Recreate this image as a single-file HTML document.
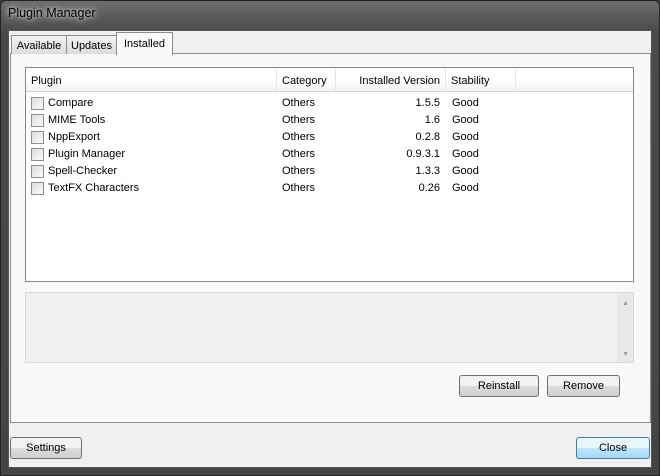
<!DOCTYPE html>
<html><head><style>
*{box-sizing:border-box;margin:0;padding:0}
body{width:660px;height:476px;overflow:hidden;font-family:"Liberation Sans",sans-serif;font-size:11px;color:#000;background:#3c3c3c;position:relative}
.frame{position:absolute;left:0;top:0;width:660px;height:476px;border:1px solid #222;border-radius:6px 6px 0 0;background:linear-gradient(#6e6e6e,#4a4a4a 30px,#444 100%)}
.title{position:absolute;left:8px;top:6px;color:#000;font-size:12.5px;text-shadow:0 0 8px #ddd,0 0 4px #ddd}
.client{position:absolute;left:8px;top:30px;width:644px;height:438px;background:#f0f0f0;border:1px solid #555}
.a{position:absolute}
.tab{position:absolute;top:4px;height:19px;border:1px solid #898c95;border-bottom:none;background:linear-gradient(#f2f2f2,#dcdcdc);padding:4px 0 0;font-size:11px;text-align:center}
.panel{position:absolute;left:1px;top:22px;width:641px;height:370px;border:1px solid #898c95;background:#f9f9f9}
.list{position:absolute;left:16px;top:36px;width:609px;height:215px;border:1px solid #828790;background:#fff}
.hdr{position:absolute;top:0;height:24px;border-right:1px solid #e5e5e5;background:linear-gradient(#fff 50%,#f1f2f4);border-bottom:1px solid #d5d5d5;padding:7px 5px 0}
.row{position:absolute;left:0;height:17px;width:100%}
.row span{position:absolute;top:3px}
.cb{position:absolute;left:5px;top:3px;width:13px;height:13px;border:1px solid #8f8f8f;background:linear-gradient(135deg,#dcdcdc,#fbfbfb)}
.btn{position:absolute;height:22px;border:1px solid #707070;border-radius:3px;background:linear-gradient(#f2f2f2 50%,#dddddd 50%,#cfcfcf);text-align:center;padding-top:4px;font-size:11px}
</style></head><body>
<div class="frame"></div>
<div class="title">Plugin Manager</div>
<div class="client">
 <div class="panel"></div>
 <div class="tab" style="left:2px;width:56px">Available</div>
 <div class="tab" style="left:57px;width:51px">Updates</div>
 <div class="tab" style="left:107px;top:1px;height:23px;width:57px;background:#f9f9f9;padding-top:5px">Installed</div>
 <div class="list">
  <div class="hdr" style="left:0;width:251px">Plugin</div>
  <div class="hdr" style="left:251px;width:59px">Category</div>
  <div class="hdr" style="left:310px;width:110px;text-align:right">Installed Version</div>
  <div class="hdr" style="left:420px;width:70px">Stability</div>
  <div class="hdr" style="left:490px;width:117px;border-right:none"></div>
  <div class="row" style="top:26px"><i class="cb"></i><span style="left:22px">Compare</span><span style="left:256px">Others</span><span style="right:193px">1.5.5</span><span style="left:426px">Good</span></div>
  <div class="row" style="top:43px"><i class="cb"></i><span style="left:22px">MIME Tools</span><span style="left:256px">Others</span><span style="right:193px">1.6</span><span style="left:426px">Good</span></div>
  <div class="row" style="top:60px"><i class="cb"></i><span style="left:22px">NppExport</span><span style="left:256px">Others</span><span style="right:193px">0.2.8</span><span style="left:426px">Good</span></div>
  <div class="row" style="top:77px"><i class="cb"></i><span style="left:22px">Plugin Manager</span><span style="left:256px">Others</span><span style="right:193px">0.9.3.1</span><span style="left:426px">Good</span></div>
  <div class="row" style="top:94px"><i class="cb"></i><span style="left:22px">Spell-Checker</span><span style="left:256px">Others</span><span style="right:193px">1.3.3</span><span style="left:426px">Good</span></div>
  <div class="row" style="top:111px"><i class="cb"></i><span style="left:22px">TextFX Characters</span><span style="left:256px">Others</span><span style="right:193px">0.26</span><span style="left:426px">Good</span></div>
 </div>
 <div class="a" style="left:16px;top:261px;width:609px;height:71px;border:1px solid #d9d9d9;background:#f0f0f0">
  <div class="a" style="right:0;top:0;width:17px;height:69px;background:#e8e8e8;border-left:1px solid #f5f5f5"></div>
  <div class="a" style="right:4px;top:7px;font-size:7px;color:#999">▲</div>
  <div class="a" style="right:4px;bottom:4px;font-size:7px;color:#999">▼</div>
 </div>
 <div class="btn" style="left:450px;top:344px;width:80px">Reinstall</div>
 <div class="btn" style="left:538px;top:344px;width:73px">Remove</div>
 <div class="btn" style="left:1px;top:406px;width:72px">Settings</div>
 <div class="btn" style="left:567px;top:406px;width:74px;border-color:#3c7fb1;background:linear-gradient(#eaf6fd 50%,#bee6fd 50%,#a7d9f5)">Close</div>
</div>
</body></html>
